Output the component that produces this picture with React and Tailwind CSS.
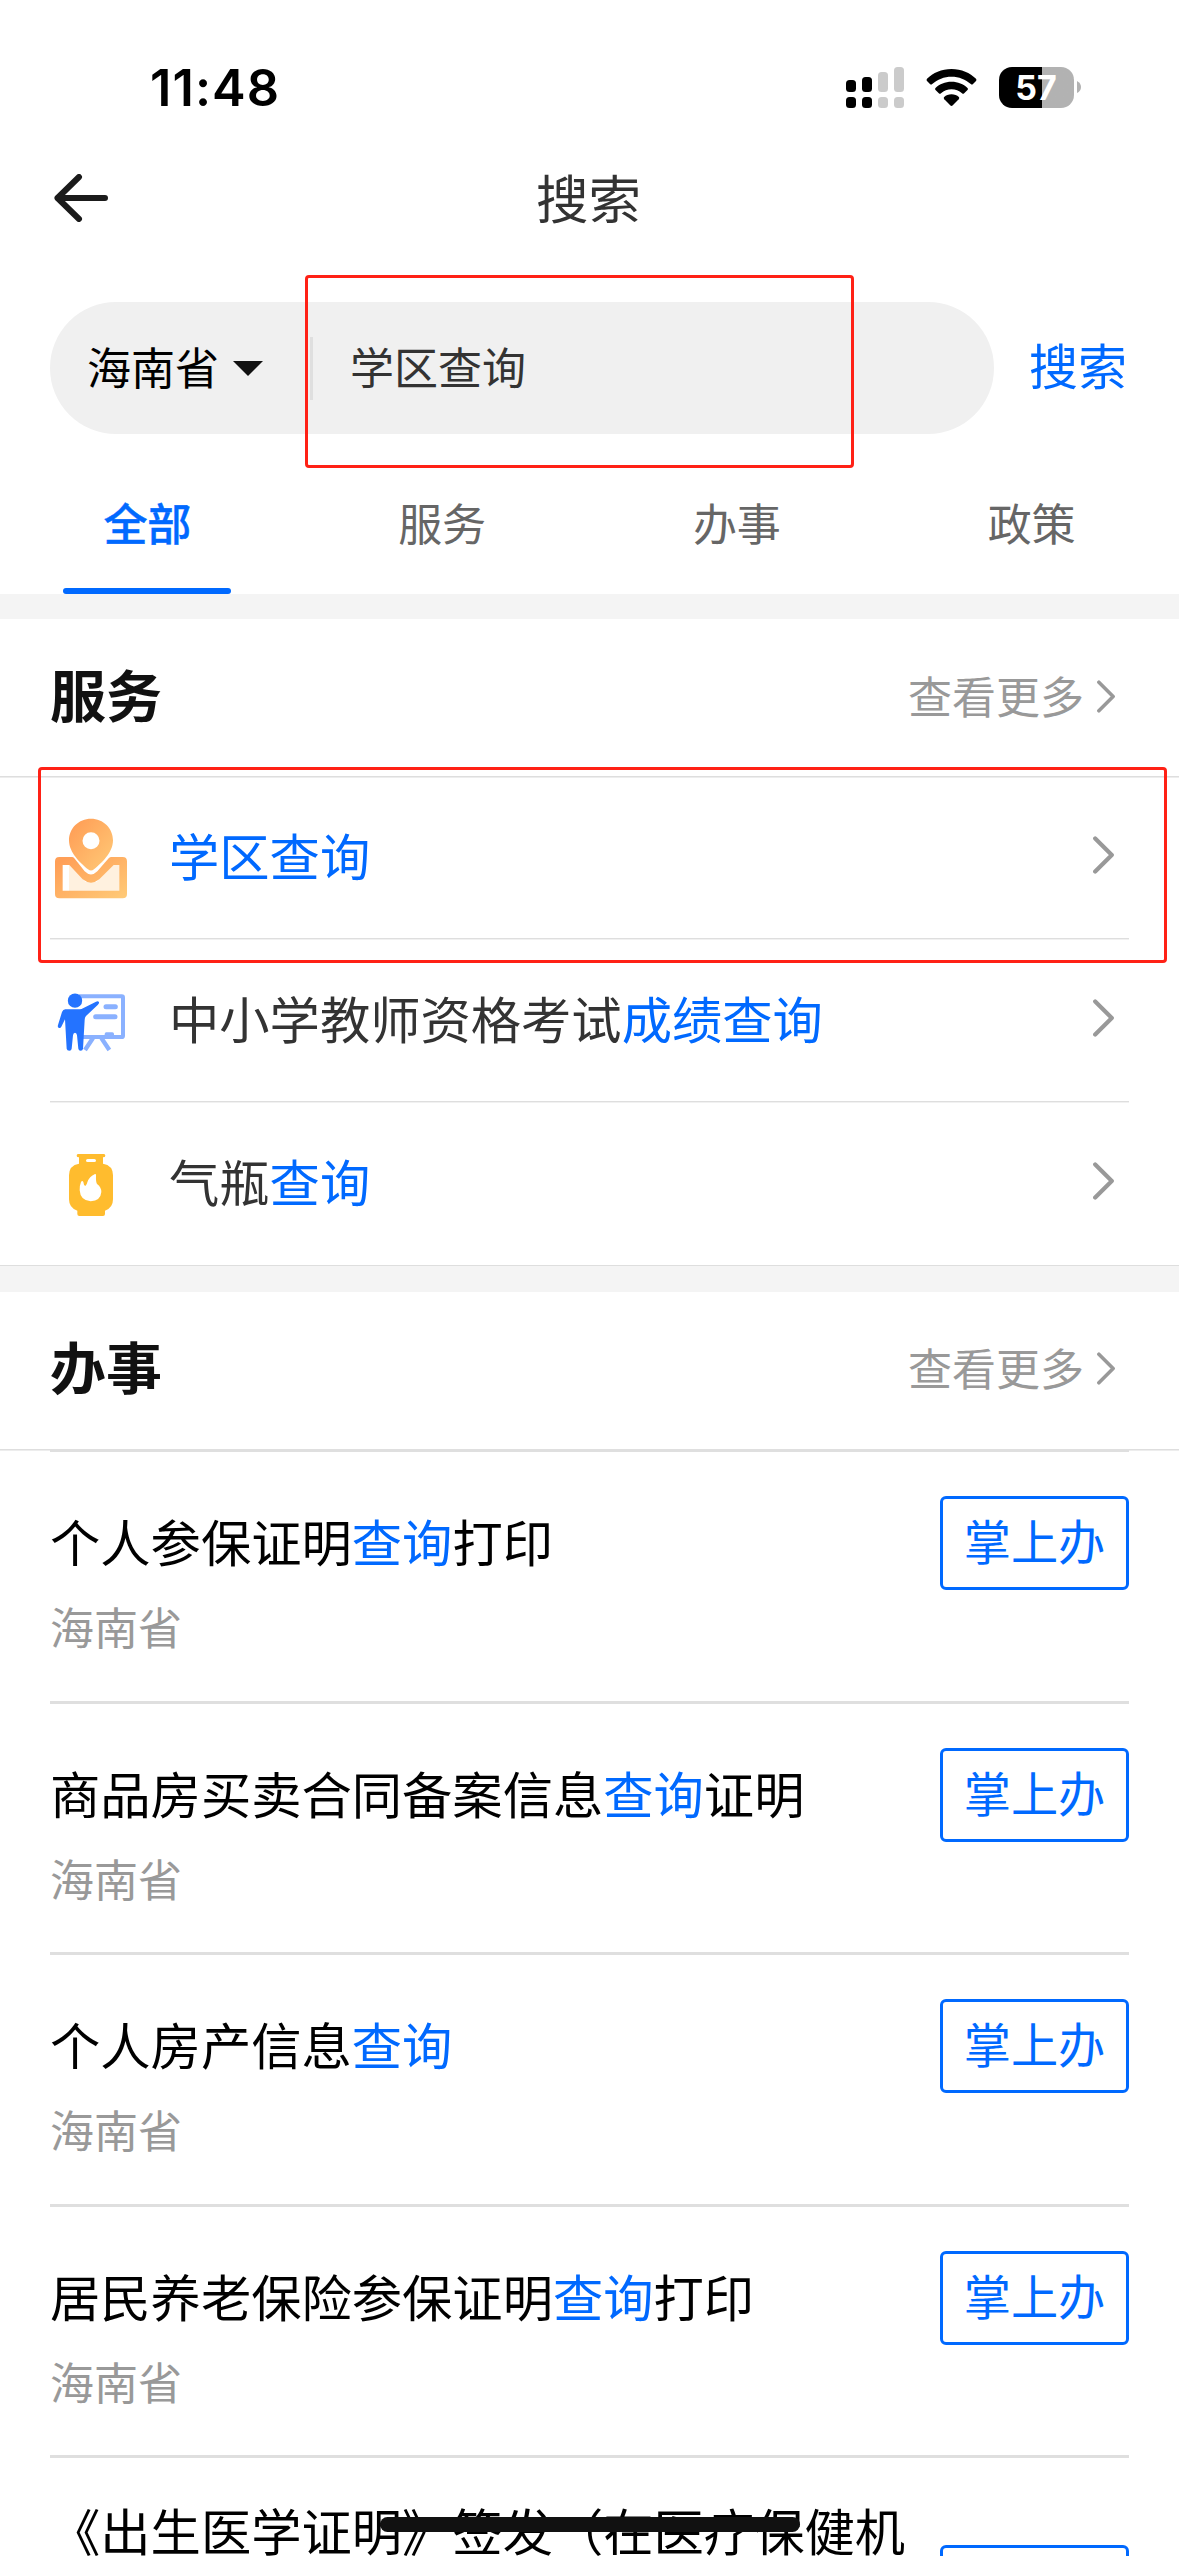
import React from "react";

const Chevron = ({ className }) => (
  <svg viewBox="0 0 21 38" className={className} fill="none" stroke="currentColor" strokeWidth="4.2" strokeLinecap="round" strokeLinejoin="round">
    <path d="M2.2 2.4 L18.8 19 L2.2 35.6" />
  </svg>
);

const MapPinIcon = () => (
  <svg viewBox="150 217 246 270" className="h-[90px] w-[82px] shrink-0">
    <defs>
      <linearGradient id="pin" x1="0" y1="0" x2="1" y2="1">
        <stop offset="0.1" stopColor="#ff9f57" />
        <stop offset="1" stopColor="#ffcb78" />
      </linearGradient>
    </defs>
    <rect x="207" y="366" width="154" height="88" fill="#fff1df" />
    <path d="M207 366H345L290 424H256Z" fill="#fff" />
    <path
      fill="url(#pin)"
      fillRule="evenodd"
      d="M178 349H216Q220 349 223 353L254 392Q273 411 292 392L326 353Q330 349 334 349H368Q381 349 381 362V460Q381 473 368 473H178Q165 473 165 460V362Q165 349 178 349ZM188 373V450H358V373H341L298 416Q273 436 248 416L208 373Z"
    />
    <path
      fill="url(#pin)"
      fillRule="evenodd"
      d="M273 234C236 234 207 263 207 299C207 337 243 369 264 386Q273 393 282 386C303 369 339 337 339 299C339 263 310 234 273 234ZM273 275A25.500 25.500 0 1 1 273 326A25.500 25.500 0 1 1 273 275Z"
    />
  </svg>
);

const TeacherIcon = () => (
  <svg viewBox="150 705 246 270" className="h-[90px] w-[82px] shrink-0">
    <g stroke="#8ab1ff" fill="none">
      <path d="M236 769H365Q369 769 369 773V887Q369 891 365 891H245" strokeWidth="12" />
      <path d="M279 894L255 930M304 894L328 930" strokeWidth="13" />
      <path d="M318 800H346M287 830H345" strokeWidth="15" strokeLinecap="round" />
    </g>
    <path d="M314 892V882Q314 877 319 877H337Q342 877 342 882V892Z" fill="#8ab1ff" />
    <circle cx="225" cy="782" r="21.500" fill="#2473ff" />
    <path
      fill="#2473ff"
      d="M196 808H240Q245 808 249 805L288 785Q295 782 297 787Q298 791 293 795L258 828Q254 833 254 840L249 926Q248 932 242 932Q236 932 235 926L231 886Q230 878 225 878Q220 878 219 886L215 926Q214 932 208 932Q201 932 200 926L195 838L184 860Q181 866 176 863Q172 861 174 855L186 816Q189 808 196 808Z"
    />
  </svg>
);

const GasIcon = () => (
  <svg viewBox="150 1197 246 270" className="h-[90px] w-[82px] shrink-0">
    <path
      fill="#ffbc2e"
      fillRule="evenodd"
      d="M234 1242H312Q316 1242 316 1247Q316 1252 309 1252V1271Q339 1276 339 1306V1378Q339 1404 315 1412V1422Q315 1428 309 1428H238Q232 1428 232 1422V1412Q207 1404 207 1378V1306Q207 1276 237 1271V1252Q230 1252 230 1247Q230 1242 234 1242ZM263 1257Q258 1257 258 1261.500Q258 1266 263 1266H283Q288 1266 288 1261.500Q288 1257 283 1257Z"
    />
    <path fill="#fff" d="M285 1302Q289 1301 288 1308Q287 1328 292 1333Q304 1342 304 1356Q302 1382 272 1384Q241 1382 239 1351Q239 1335 243 1326Q247 1320 250 1326Q251 1336 256 1338Q261 1334 262 1327Q268 1309 285 1302Z" />
  </svg>
);

const Blue = ({ children }) => <span className="text-[#0069ff]">{children}</span>;

const services = [
  { icon: <MapPinIcon />, height: "h-[162px]", border: "border-b shadow-[0_1px_0_#f1f1f1]", text: <Blue>学区查询</Blue> },
  { icon: <TeacherIcon />, height: "h-[163px]", border: "border-b shadow-[0_1px_0_#f1f1f1]", text: <>中小学教师资格考试<Blue>成绩查询</Blue></> },
  { icon: <GasIcon />, height: "h-[163px]", border: "", text: <>气瓶<Blue>查询</Blue></> },
];

const affairs = [
  { height: "h-[252px]", text: <>个人参保证明<Blue>查询</Blue>打印</> },
  { height: "h-[251px]", text: <>商品房买卖合同备案信息<Blue>查询</Blue>证明</> },
  { height: "h-[252px]", text: <>个人房产信息<Blue>查询</Blue></> },
  { height: "h-[251px]", text: <>居民养老保险参保证明<Blue>查询</Blue>打印</> },
  { height: "h-[340px]", tall: true, text: <>《出生医学证明》签发（在医疗保健机</> },
];

const tabs = ["全部", "服务", "办事", "政策"];

const SectionHeader = ({ title, titlePad, morePad }) => (
  <div className="flex h-[158px] items-center justify-between border-b border-[#dedede] pr-[64px] pl-[50px] shadow-[0_1px_0_#ededed]">
    <h2 className={`text-[56px] leading-none font-bold text-[#111] ${titlePad}`}>{title}</h2>
    <div className={`flex items-center gap-[13px] text-[44px] leading-none text-[#999] ${morePad}`}>
      <span className="pb-[4px]">查看更多</span>
      <Chevron className="h-[33px] w-[18px]" />
    </div>
  </div>
);

const StatusBar = () => (
  <div className="flex h-[145px] items-start justify-between pr-[98px] pl-[150px]">
    <div className="mt-[58px] font-[Inter] text-[50.5px] leading-[60px] font-semibold tracking-[1.1px] text-black">11:48</div>
    <div className="mt-[67px] flex h-[41px] items-start">
      <svg viewBox="0 0 58 41" className="h-[41px] w-[58px]">
        <rect x="0" y="13" width="10" height="12" rx="3.500" />
        <rect x="16" y="10" width="10" height="15" rx="3.500" />
        <rect x="0" y="30" width="10" height="11" rx="3.500" />
        <rect x="16" y="30" width="10" height="11" rx="3.500" />
        <g fill="#cbcbcb">
          <rect x="32" y="5" width="10" height="20" rx="3.500" />
          <rect x="48" y="0" width="10" height="25" rx="3.500" />
          <rect x="32" y="30" width="10" height="11" rx="3.500" />
          <rect x="48" y="30" width="10" height="11" rx="3.500" />
        </g>
      </svg>
      <svg viewBox="0 0 50 37" className="mt-[2px] ml-[22px] h-[37px] w-[51px]">
        <path d="M25 0C35 0 43.500 3.800 49.500 9.800Q50.500 11 49.500 12L46.500 15Q45.500 16 44.300 15C39 10.300 32.500 7.700 25 7.700S11 10.300 5.700 15Q4.500 16 3.500 15L.5 12Q-.5 11 .5 9.800C6.500 3.800 15 0 25 0Z" />
        <path d="M25 12.700C31.500 12.700 36.800 15 41 18.900Q42 20 41 21L37.700 24.300Q36.600 25.300 35.500 24.300C32.500 21.700 29 20.300 25 20.300S17.500 21.700 14.500 24.300Q13.400 25.300 12.300 24.300L9 21Q8 20 9 18.900C13.200 15 18.500 12.700 25 12.700Z" />
        <path d="M25 25.200C28 25.200 30.500 26.200 32.300 27.900Q33.200 29 32.200 30.200L26.300 36.300Q25 37.500 23.700 36.300L17.800 30.200Q16.800 29 17.700 27.900C19.500 26.200 22 25.200 25 25.200Z" />
      </svg>
      <div className="ml-[22px] flex h-[41px] w-[75px] items-center justify-center rounded-[13px] bg-linear-to-r from-black from-[57.500%] to-[#b2b2b2] to-[57.500%] pr-[1px] font-[Inter] text-[34px] leading-none font-bold text-white">
        57
      </div>
      <svg viewBox="0 0 4 12" className="mt-[14px] ml-[3px] h-[12px] w-[4px]">
        <path d="M0 0Q4 2 4 6T0 12Z" fill="#b2b2b2" />
      </svg>
    </div>
  </div>
);

export default function App() {
  return (
    <div className="relative h-[2556px] w-[1179px] overflow-hidden bg-white font-['Noto_Sans_CJK_SC',sans-serif] whitespace-nowrap">
      <StatusBar />

      <header className="grid h-[106px] grid-cols-3 items-center px-[54px]">
        <svg viewBox="0 0 54 48" className="h-[48px] w-[54px]" fill="none" stroke="#1b1b1b" strokeWidth="6" strokeLinecap="round" strokeLinejoin="round">
          <path d="M25 3L3.500 24L25 45M3.500 24H51" />
        </svg>
        <h1 className="pr-[2px] pb-[4px] text-center text-[52.5px] leading-none text-[#333]">搜索</h1>
      </header>

      <div className="mt-[51px] flex items-center pl-[50px]">
        <div className="flex h-[132px] w-[944px] items-center rounded-full bg-[#f0f0f0] text-[44px] leading-none">
          <span className="ml-[37px] pb-[4px] text-black">海南省</span>
          <svg viewBox="0 0 30 15" className="ml-[14px] h-[15px] w-[30px]">
            <path d="M0 0H30L15 15Z" fill="#111" />
          </svg>
          <span className="ml-[47px] h-[63px] w-[3px] bg-[#dfdfdf]" />
          <span className="ml-[37px] pb-[4px] text-[#333]">学区查询</span>
        </div>
        <button className="ml-[35px] pb-[9px] text-[49px] leading-none text-[#0069ff]">搜索</button>
      </div>

      <nav className="grid h-[160px] grid-cols-4 text-[44px] leading-none">
        {tabs.map((tab, i) => (
          <div key={tab} className="flex flex-col items-center justify-between pt-[66px]">
            <span className={i === 0 ? "font-medium text-[#0069ff] [-webkit-text-stroke:0.4px_#0069ff]" : "text-[#666]"}>{tab}</span>
            {i === 0 && <span className="h-[6px] w-[168px] rounded-full bg-[#0069ff]" />}
          </div>
        ))}
      </nav>
      <div className="h-[25px] bg-[#f4f4f4]" />

      <section>
        <SectionHeader title="服务" titlePad="pb-[10px]" morePad="pb-[2px]" />
        <div className="px-[50px]">
          {services.map((s, i) => (
            <div key={i} className={`flex items-center border-[#dedede] ${s.height} ${s.border}`}>
              {s.icon}
              <span className="ml-[37px] flex-1 pb-[6px] text-[50.3px] leading-none text-[#333]">{s.text}</span>
              <Chevron className="mr-[15px] mb-[5px] h-[38px] w-[21px] text-[#999]" />
            </div>
          ))}
        </div>
      </section>
      <div className="h-[27px] border-t border-[#dedede] bg-[#f4f4f4]" />

      <section>
        <SectionHeader title="办事" titlePad="pb-[12px]" morePad="pb-[4px]" />
        <div className="-mt-px px-[50px]">
          {affairs.map((a, i) => (
            <article key={i} className={`border-t-[3px] border-[#dfdfdf] pt-[44px] ${a.height}`}>
              <div className="flex items-center justify-between">
                <h3 className={`text-[50.3px] text-black ${a.tall ? "h-[180px] leading-[54px]" : "pb-[6px] leading-[60px]"}`}>{a.text}</h3>
                <button aria-label="掌上办" className="h-[94px] w-[189px] rounded-[6px] border-[3px] border-[#0069ff] pb-[6px] text-[47.2px] leading-none text-[#0069ff]">
                  {a.tall ? null : "掌上办"}
                </button>
              </div>
              {!a.tall && <p className="mt-[14px] text-[44px] leading-none text-[#999]">海南省</p>}
            </article>
          ))}
        </div>
      </section>

      <div className="absolute top-[275px] left-[305px] h-[193px] w-[549px] rounded-[4px] border-[3px] border-[#ff2116]" />
      <div className="absolute top-[767px] left-[38px] h-[196px] w-[1129px] rounded-[4px] border-[3px] border-[#ff2116]" />
      <div className="absolute top-[2517px] left-[380px] h-[15px] w-[420px] rounded-full bg-[#111]" />
    </div>
  );
}
